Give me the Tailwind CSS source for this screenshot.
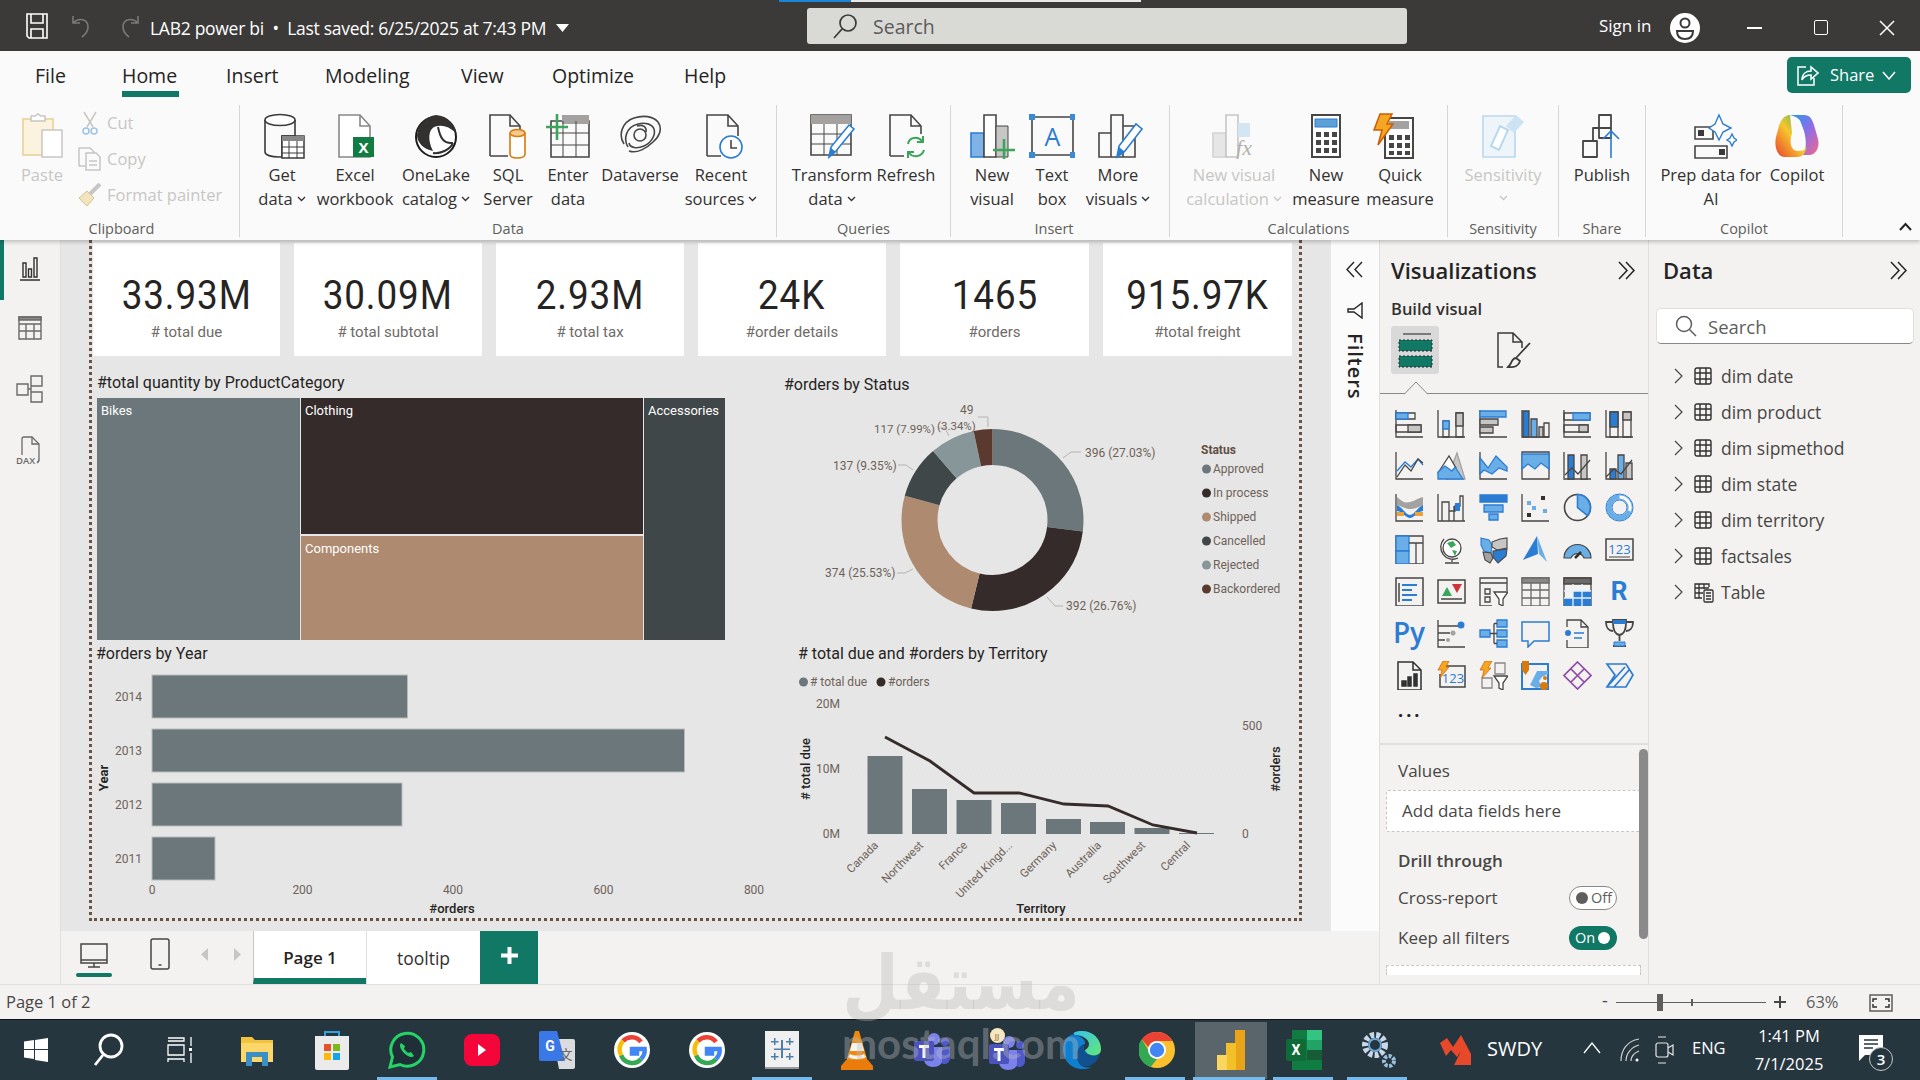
<!DOCTYPE html>
<html lang="en">
<head>
<meta charset="UTF-8">
<title>LAB2 power bi</title>
<script src="https://cdn.jsdelivr.net/npm/@tailwindcss/browser@4"></script>
</head>
<body class="relative w-[1920px] h-[1080px] overflow-hidden flex flex-col bg-[#f3f2f1] text-[#323130] font-['Open_Sans',sans-serif]">

<!-- title bar -->
<header class="relative h-[51px] bg-[#3b3a39] text-white flex items-center shrink-0">
  <div class="absolute left-[779px] top-0 h-[2px] w-[72px] bg-[#1a86d8]"></div>
  <div class="absolute left-[851px] top-0 h-[2px] w-[290px] bg-[#e8e8e8]"></div>
  <svg class="ml-[25px] w-[24px] h-[26px]" viewBox="0 0 24 26" fill="none" stroke="#fff" stroke-width="1.6"><path d="M2 1h20v24H4l-2-2z"/><path d="M6 1v9h12V1M6 25v-9h12v9"/></svg>
  <svg class="ml-[21px] w-[24px] h-[26px]" viewBox="0 0 24 26" fill="none" stroke="#7a7977" stroke-width="1.6"><path d="M3 3v7h7M3 10c6-6 15-4 15 4 0 4-2 7-6 10"/></svg>
  <svg class="ml-[23px] w-[24px] h-[26px]" viewBox="0 0 24 26" fill="none" stroke="#7a7977" stroke-width="1.6"><path d="M21 3v7h-7M21 10c-6-6-15-4-15 4 0 4 2 7 6 10"/></svg>
  <span class="ml-[9px] mt-[5px] text-[17.5px] whitespace-nowrap tracking-[-0.28px]">LAB2 power bi&nbsp; •&nbsp; Last saved: 6/25/2025 at 7:43 PM</span>
  <svg class="absolute left-[556px] top-[24px] w-[13px] h-[8px]" viewBox="0 0 13 8"><path d="M0 0h13L6.5 8z" fill="#fff"/></svg>
  <div class="absolute left-[807px] top-[8px] w-[600px] h-[36px] bg-[#d9d9d6] rounded-[3px] flex items-center text-[#5c5b59]">
    <svg class="ml-[25px] w-[26px] h-[26px]" viewBox="0 0 26 26" fill="none" stroke="#3b3a39" stroke-width="1.7"><circle cx="16" cy="10" r="8"/><path d="M10 16l-8 9"/></svg>
    <span class="ml-[15px] mt-[2px] text-[19.5px]">Search</span>
  </div>
  <span class="absolute left-[1599px] top-[14px] text-[17px] leading-[24px]">Sign in</span>
  <svg class="absolute left-[1670px] top-[13px] w-[30px] h-[30px]" viewBox="0 0 30 30" fill="none"><circle cx="15" cy="15" r="15" fill="#fff"/><circle cx="15" cy="10" r="4.5" stroke="#3b3a39" stroke-width="2"/><path d="M7 18h16c0 5-3 8-8 8s-8-3-8-8z" stroke="#3b3a39" stroke-width="2"/></svg>
  <div class="absolute left-[1747px] top-[27px] w-[15px] h-[1.5px] bg-white"></div>
  <div class="absolute left-[1814px] top-[20px] w-[14px] h-[15px] border-[1.5px] border-white rounded-[2px]"></div>
  <svg class="absolute left-[1879px] top-[20px] w-[16px] h-[16px]" viewBox="0 0 16 16" stroke="#fff" stroke-width="1.5"><path d="M1 1l14 14M15 1L1 15"/></svg>
</header>

<!-- ribbon -->
<section class="relative h-[189px] bg-[#fafafa] shrink-0 shadow-[0_2px_4px_rgba(0,0,0,0.22)] z-10">
  <nav class="h-[54px] flex items-center pl-[35px] pb-[4px] text-[19.5px] text-[#252423]">
    <span class="w-[87px]">File</span>
    <span class="w-[104px] relative font-medium">Home<span class="absolute left-0 top-[30px] w-[57px] h-[6px] bg-[#117865]"></span></span>
    <span class="w-[99px]">Insert</span>
    <span class="w-[136px]">Modeling</span>
    <span class="w-[91px]">View</span>
    <span class="w-[132px]">Optimize</span>
    <span>Help</span>
  </nav>
  <div class="absolute left-[1787px] top-[6px] w-[124px] h-[36px] bg-[#117865] rounded-[5px] text-white flex items-center text-[16.5px]">
    <svg class="ml-[9px] w-[23px] h-[23px]" viewBox="0 0 23 23" fill="none" stroke="#fff" stroke-width="1.5"><path d="M10 3H2v18h16v-7"/><path d="M6 16c0-6 4-9 9-9V3l7 6-7 6v-4c-4 0-7 1-9 5z"/></svg>
    <span class="ml-[11px]">Share</span>
    <svg class="ml-[8px] w-[14px] h-[9px]" viewBox="0 0 14 9" fill="none" stroke="#fff" stroke-width="1.5"><path d="M1 1l6 7 6-7"/></svg>
  </div>

  <div class="flex h-[132px] text-[16.5px] leading-[24px] text-[#323130] text-center">

    <!-- clipboard -->
    <div class="w-[240px] border-r border-[#d6d6d6] relative flex flex-col text-[#c8c6c4]">
      <div class="flex h-[116px]">
        <div class="w-[78px] flex flex-col items-center pt-[8px]">
          <svg class="w-[44px] h-[46px] ml-[8px]" viewBox="0 0 44 46" fill="none"><path d="M2 6h30v36H2z" fill="#fbf3dd" stroke="#ecd9a8" stroke-width="2"/><path d="M10 8V3h4l3-2 3 2h4v5z" fill="#fff" stroke="#c8c6c4" stroke-width="1.5"/><path d="M21 17h20v27H21z" fill="#fff" stroke="#c8c6c4" stroke-width="1.5"/></svg>
          <span class="mt-[4px] ml-[6px]">Paste</span>
        </div>
        <div class="flex-1 text-left">
          <div class="h-[36px] flex items-center"><svg class="w-[16px] h-[24px] ml-[4px]" viewBox="0 0 16 24" fill="none" stroke="#c8c6c4" stroke-width="1.5"><path d="M2 1l9 15M14 1L5 16"/><circle cx="4" cy="20" r="3" stroke="#9dc3e6"/><circle cx="12" cy="20" r="3" stroke="#9dc3e6"/></svg><span class="ml-[9px]">Cut</span></div>
          <div class="h-[36px] flex items-center"><svg class="w-[24px] h-[24px]" viewBox="0 0 24 24" fill="none" stroke="#c8c6c4" stroke-width="1.5"><path d="M1 1h11l4 4v14H1z"/><path d="M8 6h10l4 4v13H8z" fill="#fafafa"/><path d="M11 14h8M11 18h8"/></svg><span class="ml-[5px]">Copy</span></div>
          <div class="h-[36px] flex items-center whitespace-nowrap"><svg class="w-[24px] h-[24px]" viewBox="0 0 24 24" fill="none"><path d="M1 15l8-7 7 7-7 8z" fill="#f2e4bd" stroke="#d8c48f"/><path d="M12 11l10-10" stroke="#c8c6c4" stroke-width="4"/></svg><span class="ml-[5px]">Format painter</span></div>
        </div>
      </div>
      <div class="text-[14.5px] text-[#605e5c] leading-[17px] text-center pl-[4px]">Clipboard</div>
    </div>

    <!-- data -->
    <div class="w-[537px] border-r border-[#d6d6d6] flex flex-col">
      <div class="flex h-[116px]">
        <div class="w-[84px] flex flex-col items-center pt-[8px]">
          <svg class="w-[44px] h-[46px] ml-[6px]" viewBox="0 0 44 46" fill="none"><path d="M2 7v32c0 3 6 5 14 5h3V23h13V7" stroke="#3b3a39" stroke-width="1.6"/><ellipse cx="17" cy="7" rx="15" ry="5.5" fill="#fff" stroke="#3b3a39" stroke-width="1.6"/><path d="M19 23h22v22H19z" fill="#fff" stroke="#3b3a39" stroke-width="1.5"/><path d="M19 23h22v5H19z" fill="#8a8886"/><path d="M19 34h22M19 40h22M26 28v17M34 28v17" stroke="#3b3a39"/></svg>
          <span class="whitespace-nowrap mt-[4px]">Get</span><span class="whitespace-nowrap flex items-center gap-[4px]">data <svg class="w-[9px] h-[6px]" viewBox="0 0 9 6" fill="none" stroke="currentColor" stroke-width="1.300"><path d="M1 1l3.500 3.500L8 1"/></svg></span>
        </div>
        <div class="w-[62px] flex flex-col items-center pt-[8px]">
          <svg class="w-[44px] h-[46px]" viewBox="0 0 44 46" fill="none"><path d="M6 44V2h21l10 11v31z" fill="#fff" stroke="#8a8886" stroke-width="1.6"/><path d="M27 2v11h10" stroke="#8a8886" stroke-width="1.6"/><path d="M20 24h21v20H20z" fill="#107c41"/><text x="30.5" y="40" text-anchor="middle" font-size="15" font-weight="700" fill="#fff" font-family="Open Sans">X</text></svg>
          <span class="whitespace-nowrap mt-[4px]">Excel</span><span class="whitespace-nowrap">workbook</span>
        </div>
        <div class="w-[100px] flex flex-col items-center pt-[8px]">
          <svg class="w-[44px] h-[46px]" viewBox="0 0 44 46" fill="none"><circle cx="22" cy="24" r="20" fill="#fff" stroke="#1d1c1b" stroke-width="2"/><path d="M22 2c12 1 20 10 20 18-7-7-15-9-22-6-5 3-7 12-1 24-10-2-16-9-16-16C4 12 12 3 22 2z" fill="#323130"/><path d="M24 14c2 10 5 17 15 16M19 40c7 1 17-3 20-10" stroke="#323130" stroke-width="2"/></svg>
          <span class="whitespace-nowrap mt-[4px]">OneLake</span><span class="whitespace-nowrap flex items-center gap-[4px]">catalog <svg class="w-[9px] h-[6px]" viewBox="0 0 9 6" fill="none" stroke="currentColor" stroke-width="1.300"><path d="M1 1l3.500 3.500L8 1"/></svg></span>
        </div>
        <div class="w-[44px] flex flex-col items-center pt-[8px]">
          <svg class="w-[44px] h-[46px] shrink-0" viewBox="0 0 44 46" fill="none"><path d="M4 43V2h20l10 11v9" stroke="#484644" stroke-width="1.6"/><path d="M24 2v11h10M4 43h18" stroke="#484644" stroke-width="1.6"/><path d="M24 20v21c0 3 3 4 7 4s8-1 8-4V20" fill="#fff" stroke="#d87a0c" stroke-width="1.6"/><ellipse cx="31.5" cy="20" rx="7.5" ry="3.5" fill="#f5c88d" stroke="#d87a0c" stroke-width="1.6"/></svg>
          <span class="whitespace-nowrap mt-[4px]">SQL</span><span class="whitespace-nowrap">Server</span>
        </div>
        <div class="w-[76px] flex flex-col items-center pt-[8px]">
          <svg class="w-[44px] h-[46px]" viewBox="0 0 44 46" fill="none"><path d="M5 8h38v36H5z" stroke="#484644" stroke-width="1.6"/><path d="M16 2h27v9H16z" fill="#a3a2a0"/><path d="M5 20h38M5 32h38M17 8v36M30 8v36" stroke="#484644"/><path d="M0 14h22M11 1v26" stroke="#3ba55c" stroke-width="2.6"/></svg>
          <span class="whitespace-nowrap mt-[4px]">Enter</span><span class="whitespace-nowrap">data</span>
        </div>
        <div class="w-[68px] flex flex-col items-center pt-[8px]">
          <svg class="w-[44px] h-[46px]" viewBox="0 0 44 46" fill="none" stroke="#484644" stroke-width="1.6"><path d="M6 31C0 22 4 9 16 5c9-3 19-2 24 4 5 7 1 15-5 20-6 6-16 12-24 9"/><path d="M10 34C5 26 8 14 20 11c7-2 14 0 16 5 2 6-3 14-10 17-7 3-14 2-15-3"/><circle cx="22" cy="22" r="6"/><path d="M28 19c1-5-3-8-9-6"/></svg>
          <span class="whitespace-nowrap mt-[4px]">Dataverse</span>
        </div>
        <div class="w-[94px] flex flex-col items-center pt-[8px]">
          <svg class="w-[44px] h-[46px]" viewBox="0 0 44 46" fill="none"><path d="M8 43V2h21l10 11v10M29 2v11h10M8 43h14" stroke="#484644" stroke-width="1.6"/><circle cx="32" cy="34" r="11" fill="#fff" stroke="#2b7cd3" stroke-width="1.6"/><path d="M32 27v8h6" stroke="#484644" stroke-width="1.6"/></svg>
          <span class="whitespace-nowrap mt-[4px]">Recent</span><span class="whitespace-nowrap flex items-center gap-[4px]">sources <svg class="w-[9px] h-[6px]" viewBox="0 0 9 6" fill="none" stroke="currentColor" stroke-width="1.300"><path d="M1 1l3.500 3.500L8 1"/></svg></span>
        </div>
      </div>
      <div class="text-[14.5px] text-[#605e5c] leading-[17px]">Data</div>
    </div>

    <!-- queries -->
    <div class="w-[174px] border-r border-[#d6d6d6] flex flex-col">
      <div class="flex h-[116px]">
        <div class="w-[110px] flex flex-col items-center pt-[8px]">
          <svg class="w-[46px] h-[46px]" viewBox="0 0 46 46" fill="none"><path d="M2 2h40v40H2z" stroke="#484644" stroke-width="1.6"/><path d="M2 2h40v9H2z" fill="#a3a2a0"/><path d="M2 21h40M2 31h40M15 11v31M28 11v31" stroke="#484644"/><path d="M20 44l2-10 18-22 5 4-18 22z" fill="#fff" stroke="#2b7cd3" stroke-width="1.6"/><path d="M20 45l2-10 5 4z" fill="#2b7cd3"/></svg>
          <span class="whitespace-nowrap mt-[4px]">Transform</span><span class="whitespace-nowrap flex items-center gap-[4px]">data <svg class="w-[9px] h-[6px]" viewBox="0 0 9 6" fill="none" stroke="currentColor" stroke-width="1.300"><path d="M1 1l3.500 3.500L8 1"/></svg></span>
        </div>
        <div class="w-[38px] flex flex-col items-center pt-[8px]">
          <svg class="w-[44px] h-[46px] shrink-0" viewBox="0 0 44 46" fill="none"><path d="M6 43V2h21l10 11v8M27 2v11h10M6 43h14" stroke="#484644" stroke-width="1.6"/><path d="M24 31c1-7 10-8 14-3M39 23v6h-6M40 37c-2 7-11 8-15 3M24 45v-6h6" stroke="#3ba55c" stroke-width="2"/></svg>
          <span class="whitespace-nowrap mt-[4px]">Refresh</span>
        </div>
      </div>
      <div class="text-[14.5px] text-[#605e5c] leading-[17px]">Queries</div>
    </div>

    <!-- insert -->
    <div class="w-[219px] border-r border-[#d6d6d6] flex flex-col">
      <div class="flex h-[116px]">
        <div class="w-[82px] flex flex-col items-center pt-[8px]">
          <svg class="w-[46px] h-[46px]" viewBox="0 0 46 46" fill="none"><path d="M2 20h13v24H2z" fill="#7fb2e5" stroke="#2b7cd3" stroke-width="1.6"/><path d="M15 2h12v42H15z" fill="#fff" stroke="#484644" stroke-width="1.6"/><path d="M27 13h12v31H27z" fill="#c8c6c4" stroke="#484644" stroke-width="1"/><path d="M24 37h22M35 26v20" stroke="#3ba55c" stroke-width="2.5"/></svg>
          <span class="whitespace-nowrap mt-[4px]">New</span><span class="whitespace-nowrap">visual</span>
        </div>
        <div class="w-[38px] flex flex-col items-center pt-[8px]">
          <svg class="w-[46px] h-[46px] shrink-0" viewBox="0 0 46 46" fill="none"><path d="M3 4h41v38H3z" stroke="#484644" stroke-width="1.6"/><path d="M0 1h6v6H0zM41 1h6v6h-6zM0 39h6v6H0zM41 39h6v6h-6z" fill="#3a8bd6"/><text x="23.5" y="33" text-anchor="middle" font-size="25" fill="#2b7cd3" font-family="Open Sans">A</text></svg>
          <span class="whitespace-nowrap mt-[4px]">Text</span><span class="whitespace-nowrap">box</span>
        </div>
        <div class="w-[94px] flex flex-col items-center pt-[8px]">
          <svg class="w-[46px] h-[46px] ml-[4px]" viewBox="0 0 46 46" fill="none" stroke="#484644" stroke-width="1.6"><path d="M2 20h12v24H2zM14 2h12v42H14zM26 13h12v31H26z"/><path d="M20 44l2-11 17-22 6 5-17 22z" fill="#fff" stroke="#2b7cd3"/><path d="M20 45l2-11 6 5z" fill="#2b7cd3" stroke="none"/></svg>
          <span class="whitespace-nowrap mt-[4px]">More</span><span class="whitespace-nowrap flex items-center gap-[4px]">visuals <svg class="w-[9px] h-[6px]" viewBox="0 0 9 6" fill="none" stroke="currentColor" stroke-width="1.300"><path d="M1 1l3.500 3.500L8 1"/></svg></span>
        </div>
      </div>
      <div class="text-[14.5px] text-[#605e5c] leading-[17px] pr-[12px]">Insert</div>
    </div>

    <!-- calculations -->
    <div class="w-[278px] border-r border-[#d6d6d6] flex flex-col">
      <div class="flex h-[116px]">
        <div class="w-[128px] flex flex-col items-center pt-[8px] text-[#c8c6c4]">
          <svg class="w-[46px] h-[46px]" viewBox="0 0 46 46" fill="none"><path d="M2 20h13v24H2z" fill="#e6e6e6" stroke="#d2d2d2" stroke-width="1.6"/><path d="M15 2h12v42H15z" fill="#fafafa" stroke="#c8c6c4" stroke-width="1.6"/><path d="M27 10h12v14H27z" fill="#d5e6f3"/><text x="33" y="42" text-anchor="middle" font-size="22" font-style="italic" fill="#b3b0ad" font-family="Liberation Serif">fx</text></svg>
          <span class="whitespace-nowrap mt-[4px]">New visual</span><span class="whitespace-nowrap flex items-center gap-[4px]">calculation <svg class="w-[9px] h-[6px]" viewBox="0 0 9 6" fill="none" stroke="currentColor" stroke-width="1.300"><path d="M1 1l3.500 3.500L8 1"/></svg></span>
        </div>
        <div class="w-[56px] flex flex-col items-center pt-[8px]">
          <svg class="w-[46px] h-[46px] shrink-0" viewBox="0 0 46 46" fill="none"><path d="M9 2h28v42H9z" fill="#fff" stroke="#484644" stroke-width="2"/><path d="M12 6h22v8H12z" fill="#5ea0d8" stroke="#2b7cd3"/><path d="M13 19h5v5h-5zM21 19h5v5h-5zM29 19h5v5h-5zM13 27h5v5h-5zM21 27h5v5h-5zM29 27h5v5h-5zM13 35h5v5h-5zM21 35h5v5h-5zM29 35h5v5h-5z" fill="#484644"/></svg>
          <span class="whitespace-nowrap mt-[4px]">New</span><span class="whitespace-nowrap">measure</span>
        </div>
        <div class="w-[92px] flex flex-col items-center pt-[8px]">
          <svg class="w-[46px] h-[46px] -ml-[12px]" viewBox="0 0 46 46" fill="none"><path d="M14 5h28v40H14z" fill="#fff" stroke="#484644" stroke-width="2"/><path d="M18 8h20v8H18z" fill="#a3a2a0"/><path d="M18 22h5v5h-5zM26 22h5v5h-5zM34 22h5v5h-5zM18 30h5v5h-5zM26 30h5v5h-5zM34 30h5v5h-5zM18 38h5v4h-5zM26 38h5v4h-5zM34 38h5v4h-5z" fill="#484644"/><path d="M9 1h12l-5 10h6L7 32l4-15H3z" fill="#f5a623" stroke="#c95f05" stroke-width="1.5"/></svg>
          <span class="whitespace-nowrap mt-[4px]">Quick</span><span class="whitespace-nowrap">measure</span>
        </div>
      </div>
      <div class="text-[14.5px] text-[#605e5c] leading-[17px]">Calculations</div>
    </div>

    <!-- sensitivity -->
    <div class="w-[111px] border-r border-[#d6d6d6] flex flex-col text-[#c8c6c4]">
      <div class="h-[116px] flex flex-col items-center pt-[8px]">
        <svg class="w-[46px] h-[46px]" viewBox="0 0 46 46" fill="none"><path d="M3 3h32v41H3z" fill="#eef5fa" stroke="#b9d8ee" stroke-width="1.6"/><path d="M11 33l9-20 8 4-9 20z" fill="#fff" stroke="#b9d8ee" stroke-width="2"/><path d="M26 13l10-11 8 7-10 11z" fill="#cbe3f3"/></svg>
        <span class="mt-[4px]">Sensitivity</span><svg class="w-[9px] h-[6px] mt-[8px]" viewBox="0 0 9 6" fill="none" stroke="currentColor" stroke-width="1.300"><path d="M1 1l3.500 3.500L8 1"/></svg>
      </div>
      <div class="text-[14.5px] text-[#605e5c] leading-[17px]">Sensitivity</div>
    </div>

    <!-- share -->
    <div class="w-[87px] border-r border-[#d6d6d6] flex flex-col">
      <div class="h-[116px] flex flex-col items-center pt-[8px]">
        <svg class="w-[46px] h-[46px]" viewBox="0 0 46 46" fill="none" stroke="#484644" stroke-width="1.8"><path d="M4 28h14v16H4zM20 2h12v23H20zM14 28V15h18" stroke-linejoin="round"/><path d="M32 45V18M24 26l8-8 8 8" stroke="#2b7cd3" stroke-width="1.6"/></svg>
        <span class="mt-[4px]">Publish</span>
      </div>
      <div class="text-[14.5px] text-[#605e5c] leading-[17px]">Share</div>
    </div>

    <!-- copilot -->
    <div class="w-[197px] border-r border-[#d6d6d6] flex flex-col">
      <div class="flex h-[116px]">
        <div class="w-[130px] flex flex-col items-center pt-[8px]">
          <svg class="w-[46px] h-[46px] ml-[6px]" viewBox="0 0 46 46" fill="none"><path d="M4 14h18v12H4zM4 33h32v12H4z" stroke="#484644" stroke-width="1.6"/><path d="M7 17h6v6H7zM28 36h6v6h-6z" fill="#3b3a39"/><path d="M28 2l4 9 8 4-8 4-4 8-4-8-6-4 6-4zM41 21l2 4 3 2-3 2-2 4-2-4-3-2 3-2z" fill="#fff" stroke="#2b7cd3" stroke-width="1.4"/></svg>
          <span class="whitespace-nowrap mt-[4px]">Prep data for</span><span>AI</span>
        </div>
        <div class="w-[42px] flex flex-col items-center pt-[8px]">
          <svg class="w-[46px] h-[46px] shrink-0" viewBox="0 0 46 46" fill="none"><defs><linearGradient id="cp1" x1="0" y1="0" x2="1" y2="1"><stop offset="0" stop-color="#1f9cf0"/><stop offset=".5" stop-color="#8b6ee6"/><stop offset="1" stop-color="#f2688b"/></linearGradient><linearGradient id="cp2" x1="0" y1="1" x2="1" y2="0"><stop offset="0" stop-color="#e7402c"/><stop offset=".5" stop-color="#f7c62d"/><stop offset="1" stop-color="#2fb56c"/></linearGradient></defs><path d="M16 2h14c6 0 8 4 10 10l4 14c2 8-2 16-9 16h-6c3-4 4-14 1-24l-3-8c-1-4-4-6-11-8z" fill="url(#cp1)"/><path d="M16 2c-6 0-9 5-11 11L2 24c-2 9 1 20 9 20h12c5 0 8-3 10-10-2 3-5 4-9 4-7 0-9-8-6-18z" fill="url(#cp2)"/></svg>
          <span class="whitespace-nowrap mt-[4px]">Copilot</span>
        </div>
      </div>
      <div class="text-[14.5px] text-[#605e5c] leading-[17px]">Copilot</div>
    </div>

    <div class="flex-1 relative"><svg class="absolute right-[8px] top-[117px] w-[13px] h-[9px]" viewBox="0 0 13 9" fill="none" stroke="#252423" stroke-width="2"><path d="M1 8l5.500-6 5.500 6"/></svg></div>
  </div>
</section>

<!-- main area -->
<main class="flex h-[744px] shrink-0 relative">

  <!-- view switcher -->
  <aside class="w-[61px] border-r border-[#e1dfdd] relative flex flex-col items-center">
    <div class="absolute left-0 top-0 w-[4px] h-[60px] bg-[#117865]"></div>
    <svg class="mt-[17px] w-[22px] h-[24px]" viewBox="0 0 22 24" fill="none" stroke="#323130" stroke-width="1.4"><path d="M1 23h20M4 6v14h3V6zM9.500 12v8h3v-8zM15 1v19h3V1z"/></svg>
    <svg class="mt-[35px] w-[24px] h-[24px]" viewBox="0 0 24 24" fill="none" stroke="#6b6a68" stroke-width="1.4"><path d="M1 1h22v22H1zM1 8h22M1 15h22M8 8v15M16 8v15"/><path d="M1 1h22v3H1z" fill="#8a8886"/></svg>
    <svg class="mt-[35px] w-[28px] h-[28px]" viewBox="0 0 28 28" fill="none" stroke="#6b6a68" stroke-width="1.4"><path d="M15 1h11v10H15zM15 17h11v10H15zM1 9h11v11H1zM12 14h3M15 6v16"/></svg>
    <svg class="mt-[33px] w-[28px] h-[30px]" viewBox="0 0 28 30" fill="none" stroke="#6b6a68" stroke-width="1.3"><path d="M6 19V3a2 2 0 0 1 2-2h8l7 7v14a5 5 0 0 1-2 5"/><path d="M16 1v7h7"/><text x="0" y="28" font-size="9.500" font-weight="600" fill="#6b6a68" stroke="none" font-family="Open Sans">DAX</text></svg>
  </aside>

  <div class="w-[1318px] flex flex-col">
    <div class="flex h-[691px]">

      <!-- report canvas -->
      <div class="w-[1270px] bg-[#e6e6e6] pl-[28px]">
        <div class="w-[1213px] h-[681px] border-x-[3px] border-b-[3px] border-dotted border-[#6b5344]">

          <!-- cards -->
          <div class="h-[116px] pt-[3px] pl-[1px] flex gap-[14px] font-['Roboto',sans-serif]">
            <div class="w-[187px] h-[113px] bg-white flex flex-col items-center pt-[31px]"><span class="text-[40px] leading-[44px] text-[#252423] tracking-[1px] scale-x-[0.92]">33.93M</span><span class="text-[15px] leading-[20px] mt-[4px] text-[#6e6a66]"># total due</span></div>
            <div class="w-[188px] h-[113px] bg-white flex flex-col items-center pt-[31px]"><span class="text-[40px] leading-[44px] text-[#252423] tracking-[1px] scale-x-[0.92]">30.09M</span><span class="text-[15px] leading-[20px] mt-[4px] text-[#6e6a66]"># total subtotal</span></div>
            <div class="w-[188px] h-[113px] bg-white flex flex-col items-center pt-[31px]"><span class="text-[40px] leading-[44px] text-[#252423] tracking-[1px] scale-x-[0.92]">2.93M</span><span class="text-[15px] leading-[20px] mt-[4px] text-[#6e6a66]"># total tax</span></div>
            <div class="w-[188px] h-[113px] bg-white flex flex-col items-center pt-[31px]"><span class="text-[40px] leading-[44px] text-[#252423] tracking-[1px] scale-x-[0.92]">24K</span><span class="text-[15px] leading-[20px] mt-[4px] text-[#6e6a66]">#order details</span></div>
            <div class="w-[189px] h-[113px] bg-white flex flex-col items-center pt-[31px]"><span class="text-[40px] leading-[44px] text-[#252423] tracking-[1px] scale-x-[0.92]">1465</span><span class="text-[15px] leading-[20px] mt-[4px] text-[#6e6a66]">#orders</span></div>
            <div class="w-[189px] h-[113px] bg-white flex flex-col items-center pt-[31px]"><span class="text-[40px] leading-[44px] text-[#252423] tracking-[1px] scale-x-[0.92]">915.97K</span><span class="text-[15px] leading-[20px] mt-[4px] text-[#6e6a66]">#total freight</span></div>
          </div>

          <!-- top row: treemap + donut -->
          <div class="flex h-[284px] font-['Roboto',sans-serif]">
            <div class="w-[668px] pl-[5px] pt-[15px]">
              <div class="text-[16px] leading-[24px] text-[#252423]">#total quantity by ProductCategory</div>
              <div class="mt-[3px] w-[628px] h-[242px] flex gap-[1px] text-[13px] text-white">
                <div class="w-[203px] bg-[#6b777a] pl-[4px] pt-[3px]">Bikes</div>
                <div class="w-[342px] flex flex-col gap-[2px]">
                  <div class="h-[136px] bg-[#362b2b] pl-[4px] pt-[3px]">Clothing</div>
                  <div class="flex-1 bg-[#ae8a70] pl-[4px] pt-[3px]">Components</div>
                </div>
                <div class="flex-1 bg-[#3f4748] pl-[4px] pt-[3px]">Accessories</div>
              </div>
            </div>
            <svg class="w-[537px] h-[284px] overflow-visible" viewBox="760 356 537 284" font-family="Roboto" font-size="12" fill="#6e6258">
              <text x="784" y="390" font-size="16" fill="#252423">#orders by Status</text>
              <g fill="none" stroke-width="36" transform="rotate(-90 992.500 520)">
                <circle cx="992.500" cy="520" r="73" pathLength="100" stroke="#6b777a" stroke-dasharray="27.03 100"/>
                <circle cx="992.500" cy="520" r="73" pathLength="100" stroke="#362b2b" stroke-dasharray="26.76 100" stroke-dashoffset="-27.03"/>
                <circle cx="992.500" cy="520" r="73" pathLength="100" stroke="#ae8a70" stroke-dasharray="25.53 100" stroke-dashoffset="-53.79"/>
                <circle cx="992.500" cy="520" r="73" pathLength="100" stroke="#3f4748" stroke-dasharray="9.35 100" stroke-dashoffset="-79.32"/>
                <circle cx="992.500" cy="520" r="73" pathLength="100" stroke="#869699" stroke-dasharray="7.99 100" stroke-dashoffset="-88.67"/>
                <circle cx="992.500" cy="520" r="73" pathLength="100" stroke="#5a3a2e" stroke-dasharray="3.34 100" stroke-dashoffset="-96.66"/>
              </g>
              <g fill="none" stroke="#b5b3b0" stroke-width="1">
                <path d="M1063 458l8-6h10M1047 597l8 9h8M913 569l-8 4h-8M913 470l-7-5h-8M949 436l-4-8h-6M988 427v-10h-10"/>
              </g>
              <text x="1085" y="457">396 (27.03%)</text>
              <text x="1066" y="610">392 (26.76%)</text>
              <text x="825" y="577">374 (25.53%)</text>
              <text x="833" y="470">137 (9.35%)</text>
              <text x="874" y="433" font-size="11.500">117 (7.99%)</text>
              <text x="937" y="430" font-size="11.500">(3.34%)</text>
              <text x="960" y="414">49</text>
              <text x="1201" y="454" font-weight="700" fill="#5e4e42">Status</text>
              <circle cx="1206.500" cy="469" r="4.500" fill="#6b777a"/><text x="1213" y="473">Approved</text>
              <circle cx="1206.500" cy="493" r="4.500" fill="#362b2b"/><text x="1213" y="497">In process</text>
              <circle cx="1206.500" cy="517" r="4.500" fill="#ae8a70"/><text x="1213" y="521">Shipped</text>
              <circle cx="1206.500" cy="541" r="4.500" fill="#3f4748"/><text x="1213" y="545">Cancelled</text>
              <circle cx="1206.500" cy="565" r="4.500" fill="#869699"/><text x="1213" y="569">Rejected</text>
              <circle cx="1206.500" cy="589" r="4.500" fill="#5a3a2e"/><text x="1213" y="593">Backordered</text>
            </svg>
          </div>

          <!-- bottom row: bar + combo -->
          <div class="flex h-[278px]">
            <svg class="w-[668px] h-[278px] overflow-visible" viewBox="92 640 668 278" font-family="Roboto" font-size="12" fill="#6e6258">
              <text x="96" y="659" font-size="16" fill="#252423">#orders by Year</text>
              <g fill="#6b777a" stroke="#b9bbbb" stroke-width="1">
                <rect x="152" y="675" width="255.500" height="43"/>
                <rect x="152" y="729" width="532.500" height="43"/>
                <rect x="152" y="783" width="250" height="43"/>
                <rect x="152" y="837" width="63" height="43"/>
              </g>
              <g text-anchor="end">
                <text x="142" y="701">2014</text><text x="142" y="755">2013</text><text x="142" y="809">2012</text><text x="142" y="863">2011</text>
              </g>
              <g text-anchor="middle">
                <text x="152" y="894">0</text><text x="302.500" y="894">200</text><text x="453" y="894">400</text><text x="603.500" y="894">600</text><text x="754" y="894">800</text>
                <text x="452" y="913" font-size="13" font-weight="500" fill="#252423">#orders</text>
                <text x="0" y="0" font-size="13" font-weight="700" fill="#252423" transform="translate(108 778) rotate(-90)">Year</text>
              </g>
            </svg>
            <svg class="w-[537px] h-[278px] overflow-visible" viewBox="760 640 537 278" font-family="Roboto" font-size="12" fill="#6e6258">
              <text x="798" y="659" font-size="16" fill="#252423"># total due and #orders by Territory</text>
              <circle cx="803.500" cy="682" r="4.500" fill="#6b777a"/><text x="810" y="686"># total due</text>
              <circle cx="881" cy="682" r="4.500" fill="#362b2b"/><text x="888" y="686">#orders</text>
              <g text-anchor="end"><text x="840" y="708">20M</text><text x="840" y="773">10M</text><text x="840" y="838">0M</text></g>
              <path d="M848 704h400M848 769h400" stroke="#dedede" stroke-dasharray="1 3"/>
              <g fill="#6b777a">
                <rect x="867.500" y="756" width="35" height="78"/><rect x="912" y="789" width="35" height="45"/><rect x="956.500" y="800" width="35" height="34"/><rect x="1001" y="803" width="35" height="31"/><rect x="1046" y="819" width="35" height="15"/><rect x="1090" y="822" width="35" height="12"/><rect x="1134.500" y="828" width="35" height="6"/><rect x="1179" y="833" width="35" height="1"/>
              </g>
              <path d="M885 737L930 761L974 793L1019 793L1064 804L1108 806L1153 825L1197 833" fill="none" stroke="#362b2b" stroke-width="2.800"/>
              <text x="1242" y="730">500</text><text x="1242" y="838">0</text>
              <g text-anchor="end" font-size="11.500">
                <text transform="translate(879 846) rotate(-45)">Canada</text>
                <text transform="translate(924 846) rotate(-45)">Northwest</text>
                <text transform="translate(968 846) rotate(-45)">France</text>
                <text transform="translate(1013 846) rotate(-45)">United Kingd...</text>
                <text transform="translate(1057 846) rotate(-45)">Germany</text>
                <text transform="translate(1102 846) rotate(-45)">Australia</text>
                <text transform="translate(1146 846) rotate(-45)">Southwest</text>
                <text transform="translate(1191 846) rotate(-45)">Central</text>
              </g>
              <g text-anchor="middle" font-size="13" font-weight="500" fill="#252423">
                <text x="1041" y="913">Territory</text>
                <text transform="translate(810 769) rotate(-90)"># total due</text>
                <text transform="translate(1280 769) rotate(-90)">#orders</text>
              </g>
            </svg>
          </div>
        </div>
      </div>

      <!-- collapsed filters -->
      <div class="w-[48px] bg-[#fbfbfb] flex flex-col items-center">
        <svg class="mt-[21px] w-[18px] h-[17px]" viewBox="0 0 18 17" fill="none" stroke="#252423" stroke-width="1.400"><path d="M8 1L1 8.500 8 16M16 1L9 8.500 16 16"/></svg>
        <svg class="mt-[24px] w-[18px] h-[17px]" viewBox="0 0 18 17" fill="none" stroke="#252423" stroke-width="1.400"><path d="M16 1v15L8 10H2V7h6z"/></svg>
        <span class="mt-[14px] text-[20px] font-semibold leading-[22px] tracking-[1px] [writing-mode:vertical-rl] text-[#252423]">Filters</span>
      </div>
    </div>

    <!-- page tabs -->
    <div class="h-[53px] flex bg-[#f3f2f1]">
      <div class="w-[58px] flex flex-col items-center pt-[10px] pl-[8px]">
        <svg class="w-[30px] h-[30px]" viewBox="0 0 30 30" fill="none" stroke="#484644" stroke-width="1.500"><path d="M2 3h26v19H2zM15 22v4M9 26h12"/><path d="M2 19h26" /></svg>
        <div class="w-[36px] h-[4px] mt-[2px] rounded-full bg-[#117865]"></div>
      </div>
      <div class="w-[66px] pt-[7px] pl-[31px]"><svg class="w-[20px] h-[32px]" viewBox="0 0 20 32" fill="none" stroke="#484644" stroke-width="1.500"><rect x="1" y="1" width="18" height="30" rx="2"/><path d="M8.500 27h3"/></svg></div>
      <div class="w-[68px] flex items-center gap-[26px] pl-[16px] pb-[6px]">
        <svg class="w-[7px] h-[13px]" viewBox="0 0 7 13"><path d="M7 0v13L0 6.500z" fill="#c8c6c4"/></svg>
        <svg class="w-[7px] h-[13px]" viewBox="0 0 7 13"><path d="M0 0v13l7-6.500z" fill="#c8c6c4"/></svg>
      </div>
      <div class="w-[113px] bg-white border-l border-[#c8c6c4] border-b-[6px] border-b-[#117865] flex items-center justify-center text-[17px] font-semibold text-[#252423] pt-[6px]">Page 1</div>
      <div class="w-[114px] bg-white border-l border-[#e1dfdd] flex items-center justify-center text-[17.5px] text-[#323130] pt-[1px]">tooltip</div>
      <div class="w-[58px] bg-[#117865] flex items-center justify-center pb-[4px]"><svg class="w-[17px] h-[17px]" viewBox="0 0 17 17"><path d="M6.500 0h4v6.500H17v4h-6.500V17h-4v-6.500H0v-4h6.500z" fill="#fff"/></svg></div>
    </div>
  </div>

  <!-- visualizations pane -->
  <aside class="w-[270px] border-x border-[#e1dfdd] overflow-hidden relative">
    <div class="h-[505px] border-b-2 border-[#e1dfdd]">
      <div class="flex items-center h-[60px] pl-[11px] pr-[12px] justify-between">
        <span class="text-[22px] font-semibold text-[#252423]">Visualizations</span>
        <svg class="w-[19px] h-[19px]" viewBox="0 0 19 19" fill="none" stroke="#252423" stroke-width="1.500"><path d="M2 1l8 8.500L2 18M9 1l8 8.500L9 18"/></svg>
      </div>
      <div class="pl-[11px] text-[16.5px] font-semibold leading-[20px] text-[#323130] -mt-[1px]">Build visual</div>
      <div class="ml-[11px] mt-[7px] flex items-center h-[48px]">
        <div class="w-[48px] h-[48px] bg-[#d9d9d9] rounded-[3px] flex items-center justify-center">
          <svg class="w-[36px] h-[38px]" viewBox="0 0 36 38"><path d="M6 3h28" stroke="#3b3a39" stroke-width="1.200"/><rect x="2" y="9" width="33" height="11" fill="#117865" stroke="#252423" stroke-dasharray="2 2"/><rect x="2" y="25" width="33" height="11" fill="#117865" stroke="#252423" stroke-dasharray="2 2"/></svg>
        </div>
        <svg class="ml-[57px] w-[38px] h-[38px]" viewBox="0 0 38 38" fill="none" stroke="#3b3a39" stroke-width="1.500"><path d="M7 36H2V2h15l9 9v6M17 2v9h9"/><path d="M34 12L20 27M12 36c7 1 11-2 12-6l-4-3c-3 0-4 3-5 5-1 2-2 3-3 4z" stroke-width="1.800"/></svg>
      </div>
      <div class="relative mt-[19px] h-0 border-t border-[#8a8886]">
        <svg class="absolute left-[24px] -top-[13px] w-[24px] h-[14px]" viewBox="0 0 24 14"><path d="M0 13.500L12 1l12 12.500" fill="#f3f2f1" stroke="#8a8886"/><path d="M1 14h22" stroke="#f3f2f1" stroke-width="2"/></svg>
      </div>

      <!-- visual type icons -->
      <div class="ml-[8px] mt-[8px] grid grid-cols-[repeat(6,42px)] auto-rows-[42px] place-items-center">
        <svg class="w-[29px] h-[29px]" viewBox="0 0 29 29" fill="none" stroke="#484644" stroke-width="1.300"><path d="M1 1v27h27"/><path d="M1 4h19v6H1z"/><path d="M1 4h12v6H1z" fill="#6aaee8" stroke="#2b7cd3"/><path d="M1 16h25v7H1z"/><path d="M13 16h13v7H13z" fill="#c8c6c4"/></svg>
        <svg class="w-[29px] h-[29px]" viewBox="0 0 29 29" fill="none" stroke="#484644" stroke-width="1.300"><path d="M1 1v27h27"/><path d="M6 12h6v16H6z"/><path d="M6 12h6v8H6z" fill="#6aaee8" stroke="#2b7cd3"/><path d="M19 4h7v24h-7z"/><path d="M19 4h7v13h-7z" fill="#c8c6c4"/></svg>
        <svg class="w-[29px] h-[29px]" viewBox="0 0 29 29" fill="none" stroke="#484644" stroke-width="1.300"><path d="M1 1v27h27"/><path d="M1 2h26v6H1z" fill="#6aaee8" stroke="#2b7cd3"/><path d="M1 10h18v6H1zM1 18h13v6H1z" fill="#c8c6c4"/></svg>
        <svg class="w-[29px] h-[29px]" viewBox="0 0 29 29" fill="none" stroke="#484644" stroke-width="1.300"><path d="M1 1v27h27"/><path d="M2 2h6v26H2z" fill="#2b7cd3"/><path d="M10 10h6v18h-6z" fill="#6aaee8"/><path d="M18 18h4v10h-4z" fill="#c8c6c4"/><path d="M23 14h5v14h-5z"/></svg>
        <svg class="w-[29px] h-[29px]" viewBox="0 0 29 29" fill="none" stroke="#484644" stroke-width="1.300"><path d="M1 1v27h27"/><path d="M1 4h26v7H1z"/><path d="M10 4h17v7H10z" fill="#6aaee8" stroke="#2b7cd3"/><path d="M1 16h24v7H1z"/><path d="M16 16h9v7h-9z" fill="#c8c6c4"/></svg>
        <svg class="w-[29px] h-[29px]" viewBox="0 0 29 29" fill="none" stroke="#484644" stroke-width="1.300"><path d="M1 1v27h27"/><path d="M5 3h8v25H5z"/><path d="M5 3h8v15H5z" fill="#2b7cd3"/><path d="M18 3h8v25h-8z"/><path d="M18 3h8v8h-8z" fill="#c8c6c4"/></svg>

        <svg class="w-[29px] h-[29px]" viewBox="0 0 29 29" fill="none" stroke="#484644" stroke-width="1.300"><path d="M1 1v27h27"/><path d="M2 20l8-9 6 5 7-8 5 6" stroke="#2b7cd3"/><path d="M2 26l8-12 6 6 7-12 5 4"/></svg>
        <svg class="w-[29px] h-[29px]" viewBox="0 0 29 29" fill="none" stroke="#484644" stroke-width="1.300"><path d="M10 28L20 2l8 26z" fill="#c8c6c4" stroke="#a3a2a0"/><path d="M1 22L12 5l7 12-9 11z" fill="#fff"/><path d="M1 28v-7l7-6 7 5 3-4 8 12z" fill="#6aaee8" stroke="#2b7cd3"/></svg>
        <svg class="w-[29px] h-[29px]" viewBox="0 0 29 29" fill="none" stroke="#484644" stroke-width="1.300"><path d="M1 1v27h27"/><path d="M1 7l8 10 8-12 11 11v4l-8-3-7 6-8-4-4 4z" fill="#6aaee8" stroke="#2b7cd3"/></svg>
        <svg class="w-[29px] h-[29px]" viewBox="0 0 29 29" fill="none" stroke="#484644" stroke-width="1.300"><path d="M1 1h27v27H1z"/><path d="M1 3h27v15l-8-6-6 6-7-5-6 5z" fill="#6aaee8" stroke="#2b7cd3"/></svg>
        <svg class="w-[29px] h-[29px]" viewBox="0 0 29 29" fill="none" stroke="#484644" stroke-width="1.300"><path d="M1 1v27h27"/><path d="M5 4h6v24H5z" fill="#2b7cd3"/><path d="M18 4h6v24h-6z" fill="#c8c6c4"/><path d="M2 24l7-7 6 6 12-14"/></svg>
        <svg class="w-[29px] h-[29px]" viewBox="0 0 29 29" fill="none" stroke="#484644" stroke-width="1.300"><path d="M1 1v27h27"/><path d="M5 18h6v10H5z" fill="#2b7cd3"/><path d="M13 4h6v24h-6z" fill="#6aaee8"/><path d="M21 12h6v16h-6z" fill="#c8c6c4"/><path d="M1 26l8-8 7 5 11-14"/></svg>

        <svg class="w-[29px] h-[29px]" viewBox="0 0 29 29" fill="none" stroke="#484644" stroke-width="1.300"><path d="M1 1v27h27"/><path d="M2 4c7 6 8 6 13 5s8-4 13-5v8c-6 3-9 4-13 4S8 14 2 12z" fill="#a3a2a0" stroke="none"/><path d="M2 12c6 3 9 10 13 10s7-7 13-10v6c-6 1-9 7-13 7S8 19 2 18z" fill="#2b7cd3" stroke="none"/><path d="M2 19h7v4H2zM20 19h8v4h-8z" fill="#e8a33d" stroke="none"/></svg>
        <svg class="w-[29px] h-[29px]" viewBox="0 0 29 29" fill="none" stroke="#484644" stroke-width="1.300"><path d="M1 1v27h27"/><path d="M5 28V9h7v19M12 18h6v-5h5V3h3v25M17 28v-15"/><path d="M18 18h5v-8h-5z" fill="#2b7cd3" stroke="none"/></svg>
        <svg class="w-[29px] h-[29px]" viewBox="0 0 29 29" fill="none" stroke="#2b7cd3" stroke-width="1.300"><path d="M1 2h27v7H1z" fill="#2b7cd3"/><path d="M5 12h19v7H5z" fill="#6aaee8"/><path d="M10 21h9v6h-9z" fill="#6aaee8"/></svg>
        <svg class="w-[29px] h-[29px]" viewBox="0 0 29 29" fill="none" stroke="#484644" stroke-width="1.300"><path d="M1 1v27h27"/><path d="M6 8h4v4H6zM22 16h4v4h-4z M11 13h4v4h-4z" fill="#6aaee8" stroke="none"/><path d="M20 3h4v4h-4zM6 20h4v4H6z" fill="#323130" stroke="none"/></svg>
        <svg class="w-[29px] h-[29px]" viewBox="0 0 29 29" fill="none" stroke="#484644" stroke-width="1.600"><circle cx="14.500" cy="14.500" r="13"/><path d="M14.500 1.500a13 13 0 0 1 10 21l-10-8z" fill="#6aaee8" stroke="#2b7cd3"/></svg>
        <svg class="w-[29px] h-[29px]" viewBox="0 0 29 29" fill="none"><circle cx="14.500" cy="14.500" r="10.500" stroke="#6aaee8" stroke-width="5"/><path d="M14.500 4a10.500 10.500 0 0 1 10 14" stroke="#fff" stroke-width="3"/><circle cx="14.500" cy="14.500" r="13.500" stroke="#2b7cd3"/><circle cx="14.500" cy="14.500" r="7.500" stroke="#2b7cd3"/></svg>

        <svg class="w-[29px] h-[29px]" viewBox="0 0 29 29" fill="none" stroke="#484644" stroke-width="1.300"><path d="M1 1h27v28H1z"/><path d="M1 1h13v15H1z" fill="#6aaee8" stroke="#2b7cd3"/><path d="M1 16h13v13H1z" fill="#6aaee8" stroke="#2b7cd3"/><path d="M14 8h14M21 8v21"/></svg>
        <svg class="w-[29px] h-[29px]" viewBox="0 0 29 29" fill="none" stroke="#484644" stroke-width="1.300"><circle cx="15" cy="13" r="9" fill="#fff"/><path d="M10 8l6-2 3 4-5 3zM15 15l5 1-2 5z" fill="#3ba55c" stroke="none"/><path d="M7 4a12 12 0 0 0 14 19M15 24v3M8 28h14"/></svg>
        <svg class="w-[29px] h-[29px]" viewBox="0 0 29 29" fill="none" stroke="#484644" stroke-width="1.100"><path d="M2 3l8 2 3 5-1 8-7-2-3-6z" fill="#6aaee8" stroke="#2b7cd3"/><path d="M13 7l8-3 7-1 0 10-10 2-5-3z" fill="#c8c6c4"/><path d="M4 17l8 1 2 5-3 5-5-3z" fill="#a3a2a0"/><path d="M14 16l14-2-1 7-8 7-5-6z" fill="#2b7cd3"/></svg>
        <svg class="w-[29px] h-[29px]" viewBox="0 0 29 29"><path d="M16 1L2 25l15-6z" fill="#2b7cd3"/><path d="M16 1l2 18 8 8z" fill="#6aaee8"/></svg>
        <svg class="w-[29px] h-[29px]" viewBox="0 0 29 29" fill="none"><path d="M1 23A13 13 0 0 1 28 23h-7a7 7 0 0 0-13 0z" fill="#6aaee8" stroke="#484644" stroke-width="1.200"/><path d="M12 23l6-6" stroke="#323130" stroke-width="2.500"/></svg>
        <svg class="w-[29px] h-[29px]" viewBox="0 0 29 29" fill="none"><path d="M1 4h27v21H1z" stroke="#484644" stroke-width="1.500"/><path d="M4 22h21" stroke="#484644"/><text x="14.500" y="19" text-anchor="middle" font-size="13" fill="#2b7cd3" font-family="Open Sans">123</text></svg>

        <svg class="w-[29px] h-[29px]" viewBox="0 0 29 29" fill="none" stroke="#484644" stroke-width="1.500"><path d="M1 1h27v28H1z"/><path d="M7 8h15M7 13h10M7 18h15M7 23h10" stroke="#2b7cd3" stroke-width="2"/><path d="M4 6v19"/></svg>
        <svg class="w-[29px] h-[29px]" viewBox="0 0 29 29" fill="none" stroke="#484644" stroke-width="1.500"><path d="M1 3h27v23H1z"/><path d="M5 19l5-9 5 9z" fill="#3ba55c" stroke="none"/><path d="M15 7h10l-5 9z" fill="#d13438" stroke="none"/><path d="M4 22h21"/></svg>
        <svg class="w-[29px] h-[29px]" viewBox="0 0 29 29" fill="none" stroke="#484644" stroke-width="1.300"><path d="M28 14V1H1v28h12M1 6h27"/><path d="M6 12h5v5H6zM6 20h5v5H6z"/><path d="M15 15h14l-5 7v7l-4-2v-5z" fill="#fff"/></svg>
        <svg class="w-[29px] h-[29px]" viewBox="0 0 29 29" fill="none" stroke="#6b6a68" stroke-width="1.300"><path d="M1 1h27v28H1z"/><path d="M1 1h27v5H1z" fill="#8a8886"/><path d="M1 13h27M1 21h27M10 6v23M19 6v23"/></svg>
        <svg class="w-[29px] h-[29px]" viewBox="0 0 29 29" fill="none" stroke="#484644" stroke-width="1.300"><path d="M1 1h27v28H1z"/><path d="M1 1h27v6H1z" fill="#6b6a68"/><path d="M10 14h18v7H10zM1 21h27v8H1z" fill="#2b7cd3" stroke="none"/><path d="M1 14h27M1 21h27M10 7v22M19 7v22" stroke="#e6f0fa"/></svg>
        <span class="text-[26px] font-bold leading-none text-[#2b7cd3] font-['Roboto',sans-serif]">R</span>

        <span class="text-[28px] font-semibold leading-none text-[#2b7cd3] -mt-[2px]">Py</span>
        <svg class="w-[29px] h-[29px]" viewBox="0 0 29 29" fill="none" stroke="#484644" stroke-width="1.300"><path d="M1 1v27h27M1 7h20M1 14h12M1 21h7"/><circle cx="24" cy="6" r="3.500" fill="#2b7cd3" stroke="none"/><circle cx="16" cy="14" r="2.500" fill="#a3a2a0" stroke="none"/><circle cx="11" cy="21" r="2" fill="#a3a2a0" stroke="none"/></svg>
        <svg class="w-[29px] h-[29px]" viewBox="0 0 29 29" fill="none" stroke="#2b7cd3" stroke-width="1.300"><path d="M1 11h10v7H1zM18 1h10v7H18zM18 11h10v7H18zM18 21h10v7H18z" fill="#6aaee8"/><path d="M11 14.500h7M15 4.500v20M15 4.500h3M15 24.500h3" stroke="#484644"/></svg>
        <svg class="w-[29px] h-[29px]" viewBox="0 0 29 29" fill="none" stroke="#2b7cd3" stroke-width="1.500"><path d="M1 3h27v19H13l-6 6v-6H1z"/></svg>
        <svg class="w-[29px] h-[29px]" viewBox="0 0 29 29" fill="none" stroke="#484644" stroke-width="1.300"><path d="M4 8V1h14l7 7v21H4v-8M18 1v7h7"/><circle cx="5" cy="14" r="3" fill="#2b7cd3" stroke="none"/><path d="M11 14h10M11 19h8" stroke="#2b7cd3"/></svg>
        <svg class="w-[29px] h-[29px]" viewBox="0 0 29 29" fill="none" stroke="#484644" stroke-width="1.800"><path d="M8 1h13v3c0 6-1 11-6.500 12C9 15 8 10 8 4z"/><path d="M8 3H1c0 6 3 9 7 9M21 3h7c0 6-3 9-7 9M14.500 16v6M8 27h13"/><path d="M8 1h13v4H8z" fill="#2b7cd3" stroke="none"/><path d="M9 23h11v4H9z" fill="#6aaee8" stroke="#2b7cd3" stroke-width="1"/></svg>

        <svg class="w-[29px] h-[29px]" viewBox="0 0 29 29" fill="none" stroke="#323130" stroke-width="1.500"><path d="M3 29V1h15l8 8v20zM18 1v8h8"/><path d="M7 25v-5h4v5zM13 25v-9h3v9zM19 25v-12h3v12z" fill="#323130"/></svg>
        <svg class="w-[29px] h-[29px]" viewBox="0 0 29 29" fill="none"><path d="M6 5h22v21H3V13" stroke="#484644" stroke-width="1.500"/><text x="16" y="22" text-anchor="middle" font-size="13" fill="#2b7cd3" font-family="Open Sans">123</text><path d="M6 0h6l-3 6h3L3 17l2-8H1z" fill="#f5a623" stroke="#c95f05" stroke-width=".7"/></svg>
        <svg class="w-[29px] h-[29px]" viewBox="0 0 29 29" fill="none" stroke="#8a8886" stroke-width="1.300"><path d="M16 2h10v11H16zM3 17h10v10H3z"/><path d="M15 15h14l-5 7v7l-4-2v-5z" fill="#fff" stroke="#484644"/><path d="M6 0h7l-4 7h3L3 17l2-8H1z" fill="#f5a623" stroke="#c95f05" stroke-width=".7"/></svg>
        <svg class="w-[29px] h-[29px]" viewBox="0 0 29 29" fill="none"><path d="M1 3h26v25H1z" stroke="#2b7cd3" stroke-width="2"/><path d="M16 10h11v3l-6 3-3 4 3 6-6 1-6-3z" fill="#6aaee8"/><path d="M1 0h7v9l-3.500 5L1 9z" fill="#d87a0c"/><circle cx="24" cy="17" r="2" fill="#d87a0c"/><circle cx="23" cy="25" r="4" fill="#d87a0c"/></svg>
        <svg class="w-[29px] h-[29px]" viewBox="0 0 29 29" fill="none" stroke="#8f4aa6" stroke-width="1.700"><path d="M14.500 1L28 14.500 14.500 28 1 14.500zM8 8l13 13M21 8L8 21"/></svg>
        <svg class="w-[29px] h-[29px]" viewBox="0 0 29 29" fill="none" stroke="#2b7cd3" stroke-width="1.700"><path d="M2 3h19l7 11-7 12H2l8-12zM2 26L20 6M9 26l15-17"/></svg>
      </div>
      <div class="ml-[18px] mt-[5px] text-[18px] tracking-[3px] leading-none text-[#252423] font-bold">...</div>
    </div>

    <!-- field wells -->
    <div class="relative pl-[18px] pt-[14px] text-[17px] text-[#484644]">
      <div class="leading-[24px]">Values</div>
      <div class="-ml-[12px] mt-[7px] w-[255px] h-[42px] bg-white border border-dashed border-[#c8c6c4] rounded-[2px] pl-[15px] flex items-center">Add data fields here</div>
      <div class="mt-[17px] font-semibold leading-[24px]">Drill through</div>
      <div class="mt-[13px] flex items-center w-[219px] justify-between h-[24px]">
        <span>Cross-report</span>
        <span class="w-[48px] h-[24px] rounded-full border border-[#8a8886] bg-white flex items-center pl-[6px] gap-[3px] text-[14.5px] text-[#605e5c]"><i class="w-[12px] h-[12px] rounded-full bg-[#605e5c]"></i>Off</span>
      </div>
      <div class="mt-[16px] flex items-center w-[219px] justify-between h-[24px]">
        <span>Keep all filters</span>
        <span class="w-[48px] h-[24px] rounded-full bg-[#117865] flex items-center pl-[6px] gap-[3px] text-[14.5px] text-white">On<i class="w-[12px] h-[12px] rounded-full bg-white"></i></span>
      </div>
      <div class="-ml-[12px] mt-[15px] w-[255px] h-[10px] bg-white border-t border-x border-dashed border-[#c8c6c4]"></div>
      <div class="absolute right-0 top-[4px] w-[9px] h-[190px] rounded-full bg-[#8a8a8a]"></div>
    </div>
  </aside>

  <!-- data pane -->
  <aside class="w-[271px]">
    <div class="flex items-center justify-between h-[60px] pl-[14px] pr-[12px]">
      <span class="text-[22px] font-semibold text-[#252423]">Data</span>
      <svg class="w-[19px] h-[19px]" viewBox="0 0 19 19" fill="none" stroke="#252423" stroke-width="1.500"><path d="M2 1l8 8.500L2 18M9 1l8 8.500L9 18"/></svg>
    </div>
    <div class="ml-[7px] mt-[8px] w-[258px] h-[36px] bg-white border border-[#e1dfdd] border-b-[#8a8886] rounded-[5px] flex items-center">
      <svg class="ml-[18px] w-[22px] h-[22px]" viewBox="0 0 22 22" fill="none" stroke="#605e5c" stroke-width="1.500"><circle cx="9" cy="9" r="7.500"/><path d="M14.500 14.500L21 21"/></svg>
      <span class="ml-[11px] mt-[1px] text-[18.5px] text-[#605e5c]">Search</span>
    </div>
    <ul class="mt-[14px] text-[17.5px] text-[#484644]">
      <li class="h-[36px] flex items-center pl-[25px]"><svg class="w-[9px] h-[16px]" viewBox="0 0 9 16" fill="none" stroke="#484644" stroke-width="1.200"><path d="M1 1l7 7-7 7"/></svg><svg class="ml-[11px] w-[18px] h-[18px]" viewBox="0 0 18 18" fill="none" stroke="#323130" stroke-width="1.400"><rect x="1" y="1" width="16" height="16" rx="2"/><path d="M1 6h16M1 12h16M6 1v16M12 1v16"/></svg><span class="ml-[9px]">dim date</span></li>
      <li class="h-[36px] flex items-center pl-[25px]"><svg class="w-[9px] h-[16px]" viewBox="0 0 9 16" fill="none" stroke="#484644" stroke-width="1.200"><path d="M1 1l7 7-7 7"/></svg><svg class="ml-[11px] w-[18px] h-[18px]" viewBox="0 0 18 18" fill="none" stroke="#323130" stroke-width="1.400"><rect x="1" y="1" width="16" height="16" rx="2"/><path d="M1 6h16M1 12h16M6 1v16M12 1v16"/></svg><span class="ml-[9px]">dim product</span></li>
      <li class="h-[36px] flex items-center pl-[25px]"><svg class="w-[9px] h-[16px]" viewBox="0 0 9 16" fill="none" stroke="#484644" stroke-width="1.200"><path d="M1 1l7 7-7 7"/></svg><svg class="ml-[11px] w-[18px] h-[18px]" viewBox="0 0 18 18" fill="none" stroke="#323130" stroke-width="1.400"><rect x="1" y="1" width="16" height="16" rx="2"/><path d="M1 6h16M1 12h16M6 1v16M12 1v16"/></svg><span class="ml-[9px]">dim sipmethod</span></li>
      <li class="h-[36px] flex items-center pl-[25px]"><svg class="w-[9px] h-[16px]" viewBox="0 0 9 16" fill="none" stroke="#484644" stroke-width="1.200"><path d="M1 1l7 7-7 7"/></svg><svg class="ml-[11px] w-[18px] h-[18px]" viewBox="0 0 18 18" fill="none" stroke="#323130" stroke-width="1.400"><rect x="1" y="1" width="16" height="16" rx="2"/><path d="M1 6h16M1 12h16M6 1v16M12 1v16"/></svg><span class="ml-[9px]">dim state</span></li>
      <li class="h-[36px] flex items-center pl-[25px]"><svg class="w-[9px] h-[16px]" viewBox="0 0 9 16" fill="none" stroke="#484644" stroke-width="1.200"><path d="M1 1l7 7-7 7"/></svg><svg class="ml-[11px] w-[18px] h-[18px]" viewBox="0 0 18 18" fill="none" stroke="#323130" stroke-width="1.400"><rect x="1" y="1" width="16" height="16" rx="2"/><path d="M1 6h16M1 12h16M6 1v16M12 1v16"/></svg><span class="ml-[9px]">dim territory</span></li>
      <li class="h-[36px] flex items-center pl-[25px]"><svg class="w-[9px] h-[16px]" viewBox="0 0 9 16" fill="none" stroke="#484644" stroke-width="1.200"><path d="M1 1l7 7-7 7"/></svg><svg class="ml-[11px] w-[18px] h-[18px]" viewBox="0 0 18 18" fill="none" stroke="#323130" stroke-width="1.400"><rect x="1" y="1" width="16" height="16" rx="2"/><path d="M1 6h16M1 12h16M6 1v16M12 1v16"/></svg><span class="ml-[9px]">factsales</span></li>
      <li class="h-[36px] flex items-center pl-[25px]"><svg class="w-[9px] h-[16px]" viewBox="0 0 9 16" fill="none" stroke="#484644" stroke-width="1.200"><path d="M1 1l7 7-7 7"/></svg><svg class="ml-[11px] w-[20px] h-[21px]" viewBox="0 0 20 21" fill="none" stroke="#323130" stroke-width="1.300"><path d="M8 16H1V2h14v3M1 6h14M1 11h8M5 2v14M10 2v5"/><rect x="10" y="8" width="9" height="12" rx="1" fill="#f3f2f1"/><path d="M12 11h5M12 14h5M12 17h5"/></svg><span class="ml-[7px]">Table</span></li>
    </ul>
  </aside>
</main>

<!-- status bar -->
<footer class="relative h-[35px] border-t border-[#e1dfdd] bg-[#f3f2f1] flex items-center text-[16.5px] text-[#484644] shrink-0">
  <span class="ml-[6px]">Page 1 of 2</span>
  <span class="absolute left-[1602px] top-[2px] text-[18px]">-</span>
  <div class="absolute left-[1616px] top-[17px] w-[150px] h-[1px] bg-[#605e5c]"></div>
  <div class="absolute left-[1657px] top-[9px] w-[6px] h-[17px] bg-[#605e5c]"></div>
  <div class="absolute left-[1691px] top-[14px] w-[1.500px] h-[7px] bg-[#605e5c]"></div>
  <svg class="absolute left-[1774px] top-[11px] w-[12px] h-[12px]" viewBox="0 0 12 12"><path d="M5 0h2v5h5v2H7v5H5V7H0V5h5z" fill="#484644"/></svg>
  <span class="absolute left-[1806px] top-[5px] text-[#605e5c]">63%</span>
  <svg class="absolute left-[1869px] top-[9px] w-[24px] h-[18px]" viewBox="0 0 24 18" fill="none" stroke="#605e5c" stroke-width="1.500"><path d="M1 1h22v16H1z"/><path d="M8 5H4v3M16 5h4v3M8 13H4v-3M16 13h4v-3" stroke="#323130"/></svg>
</footer>

<!-- taskbar -->
<div class="relative h-[61px] bg-[#26363f] border-t border-black/60 flex items-center shrink-0 text-white">
  <div class="w-[72px] flex justify-center"><svg class="w-[24px] h-[24px]" viewBox="0 0 24 24" fill="#fff"><path d="M0 3.500l10-1.400V11H0zM11 2l13-2v11H11zM0 12h10v9L0 19.500zM11 12h13v12l-13-2z"/></svg></div>
  <div class="w-[72px] flex justify-center"><svg class="w-[34px] h-[34px]" viewBox="0 0 34 34" fill="none" stroke="#fff" stroke-width="2.800"><circle cx="20" cy="13" r="11"/><path d="M12 22L4 32"/></svg></div>
  <div class="w-[72px] flex justify-center"><svg class="w-[26px] h-[28px]" viewBox="0 0 26 28" fill="none" stroke="#fff" stroke-width="1.300"><path d="M1 2h16v3H1M1 9h16v10H1zM1 26v-3h16v3M24 1v9M24 17v10"/><path d="M22 12h3v3h-3z" fill="#fff" stroke="none"/></svg></div>
  <div class="ml-[3.500px] flex items-center">
    <div class="w-[75px] flex justify-center"><svg class="w-[32px] h-[32px]" viewBox="0 0 32 32"><path d="M0 3h11l3 3h18v22H0z" fill="#f4c33d"/><path d="M0 9h32v19H0z" fill="#fdd769"/><path d="M5 18h22v14H21V23H11v9H5z" fill="#3a8fc7"/></svg></div>
    <div class="w-[75px] flex justify-center"><svg class="w-[34px] h-[40px]" viewBox="0 0 34 40"><path d="M10 8V2h14v6" fill="none" stroke="#33a0e0" stroke-width="2"/><path d="M0 6h34v32a2 2 0 0 1-2 2H2a2 2 0 0 1-2-2z" fill="#ebebeb"/><path d="M9 14h7v7H9z" fill="#e8502a"/><path d="M18 14h7v7h-7z" fill="#7db71c"/><path d="M9 23h7v7H9z" fill="#fbb90a"/><path d="M18 23h7v7h-7z" fill="#15a4ea"/></svg></div>
    <div class="w-[75px] flex justify-center"><svg class="w-[38px] h-[38px]" viewBox="0 0 38 38" fill="none"><path d="M2 36l2.500-10A16.500 16.500 0 1 1 12 33.500z" fill="#1f2f38" stroke="#25d366" stroke-width="3"/><path d="M13 12c-2 2-1 6 3 10s8 5 10 3l-3-4-3 1-4-4 1-3z" fill="#25d366"/></svg></div>
    <div class="w-[75px] flex justify-center"><svg class="w-[36px] h-[32px]" viewBox="0 0 36 32"><rect width="36" height="32" rx="8" fill="#f5063a"/><path d="M14 10l8 6-8 6z" fill="#fff"/></svg></div>
    <div class="w-[75px] flex justify-center"><svg class="w-[36px] h-[38px]" viewBox="0 0 36 38"><path d="M14 8h20a2 2 0 0 1 2 2v26a2 2 0 0 1-2 2H20z" fill="#dadce0"/><path d="M2 0h16l8 30H2a2 2 0 0 1-2-2V2a2 2 0 0 1 2-2z" fill="#3b78e7"/><text x="11" y="20" text-anchor="middle" font-size="14" font-weight="700" fill="#fff" font-family="Roboto">G</text><text x="27" y="28" text-anchor="middle" font-size="13" fill="#666" font-family="Noto Sans CJK SC">文</text></svg></div>
    <div class="w-[75px] flex justify-center"><svg class="w-[36px] h-[40px]" viewBox="0 0 40 40"><ellipse cx="20" cy="20" rx="20" ry="20" fill="#fff"/><path d="M30 11a13 13 0 0 0-20-1" fill="none" stroke="#ea4335" stroke-width="5"/><path d="M10 10a13 13 0 0 0-2 16" fill="none" stroke="#fbbc05" stroke-width="5"/><path d="M8 26a13 13 0 0 0 22 4" fill="none" stroke="#34a853" stroke-width="5"/><path d="M30 30a13 13 0 0 0 4-11H20v5h8" fill="none" stroke="#4285f4" stroke-width="5"/></svg></div>
    <div class="w-[75px] flex justify-center"><svg class="w-[36px] h-[40px]" viewBox="0 0 40 40"><ellipse cx="20" cy="20" rx="20" ry="20" fill="#fff"/><path d="M30 11a13 13 0 0 0-20-1" fill="none" stroke="#ea4335" stroke-width="5"/><path d="M10 10a13 13 0 0 0-2 16" fill="none" stroke="#fbbc05" stroke-width="5"/><path d="M8 26a13 13 0 0 0 22 4" fill="none" stroke="#34a853" stroke-width="5"/><path d="M30 30a13 13 0 0 0 4-11H20v5h8" fill="none" stroke="#4285f4" stroke-width="5"/></svg></div>
    <div class="w-[75px] flex justify-center"><svg class="w-[34px] h-[38px]" viewBox="0 0 34 38"><rect width="34" height="38" fill="#f0f0f0"/><rect y="36" width="34" height="2" fill="#9a9a9a"/><path d="M16 9h2v18h-2zM9 17.500h16v1.500H9zM9 7h1.500v7H9zM6 10h7.500v1.500H6zM24 7h1.500v7H24zM21 10h7.500v1.500H21zM9 22h1.500v7H9zM6 25h7.500v1.500H6zM24 22h1.500v7H24zM21 25h7.500v1.500H21z" fill="#4f7ea8"/></svg></div>
    <div class="w-[75px] flex justify-center"><svg class="w-[32px] h-[40px]" viewBox="0 0 32 40"><path d="M14 1h4l9 31H5z" fill="#f08a0c"/><path d="M11 13h10l2 8H9z" fill="#f4f4f4"/><path d="M7 27l2-3c4 2 10 2 14 0l2 3c-5 3-13 3-18 0z" fill="#f4f4f4"/><path d="M0 36l5-6h22l5 6v4H0z" fill="#e97c0a"/></svg></div>
    <div class="w-[75px] flex justify-center"><svg class="w-[36px] h-[34px]" viewBox="0 0 36 34"><circle cx="20" cy="6" r="6" fill="#7b83eb"/><circle cx="31" cy="9" r="4" fill="#5059c9"/><path d="M26 14h10v11c0 4-3 6-6 6-2 0-4-1-5-3z" fill="#5059c9"/><path d="M10 14h18v13c0 4-3 7-9 7s-9-4-9-8z" fill="#7b83eb"/><rect y="8" width="20" height="20" rx="2" fill="#4b53bc"/><path d="M5 12h10v3h-3.500v10h-3V15H5z" fill="#fff"/></svg></div>
    <div class="w-[75px] flex justify-center relative"><svg class="w-[36px] h-[34px] mt-[6px]" viewBox="0 0 36 34"><circle cx="20" cy="6" r="6" fill="#7b83eb"/><circle cx="31" cy="9" r="4" fill="#5059c9"/><path d="M26 14h10v11c0 4-3 6-6 6-2 0-4-1-5-3z" fill="#5059c9"/><path d="M10 14h18v13c0 4-3 7-9 7s-9-4-9-8z" fill="#7b83eb"/><rect y="8" width="20" height="20" rx="2" fill="#4b53bc"/><path d="M5 12h10v3h-3.500v10h-3V15H5z" fill="#fff"/></svg><span class="absolute left-[20px] top-[-2px] w-[15px] h-[15px] rounded-full bg-[#f6e7c1] text-[#7a4a1a] text-[8px] leading-[15px] text-center">JJ</span></div>
    <div class="w-[75px] flex justify-center"><svg class="w-[38px] h-[38px]" viewBox="0 0 38 38"><defs><linearGradient id="ed1" x1="0" y1="0" x2="1" y2="1"><stop offset="0" stop-color="#35c1f1"/><stop offset="1" stop-color="#66eb6e"/></linearGradient></defs><path d="M19 0c11 0 19 8 19 18 0 6-5 8-10 8-6 0-7-2-7-4 0-4 5-4 5-9 0-5-7-9-14-9C8 2 13 0 19 0z" fill="url(#ed1)"/><path d="M0 18C0 8 8 2 12 4c6 1 11 5 10 9-4 1-9 6-8 13s6 12 14 10c-3 2-6 2-9 2C8 38 0 29 0 18z" fill="#0f7fd0"/><path d="M14 24c0-6 4-10 8-11-2 3-1 7 3 10 4 2 9 2 12-1-2 9-10 15-17 13-3-2-6-6-6-11z" fill="#12518f"/></svg></div>
    <div class="w-[75px] flex justify-center"><svg class="w-[36px] h-[40px]" viewBox="0 0 40 40"><circle cx="20" cy="20" r="20" fill="#fbc02d"/><path d="M20 0a20 20 0 0 1 17.300 10H20a10 10 0 0 0-9.500 7L3 8A20 20 0 0 1 20 0z" fill="#ea4335"/><path d="M3 8l8 13a10 10 0 0 0 9 9l-7 9A20 20 0 0 1 3 8z" fill="#34a853"/><circle cx="20" cy="20" r="10" fill="#fff"/><circle cx="20" cy="20" r="8" fill="#4285f4"/></svg></div>
    <div class="w-[72px] h-[57px] bg-[#5a646b] flex justify-center items-center"><svg class="w-[28px] h-[40px]" viewBox="0 0 28 40"><path d="M18 0h10v40H18z" fill="#e8a317"/><path d="M9 13h10v27H9z" fill="#f2c029"/><path d="M0 25h10v15H0z" fill="#fad65e"/></svg></div>
    <div class="w-[75px] flex justify-center"><svg class="w-[36px] h-[40px]" viewBox="0 0 36 40"><path d="M6 0h30v40H6z" fill="#107c41"/><path d="M21 0h15v10H21z" fill="#33c481"/><path d="M21 10h15v10H21z" fill="#21a366"/><path d="M21 20h15v10H21z" fill="#185c37"/><rect y="9" width="20" height="22" rx="2" fill="#0e6b38"/><text x="10" y="25" text-anchor="middle" font-size="14" font-weight="700" fill="#fff" font-family="Roboto">X</text></svg></div>
    <div class="w-[75px] flex justify-center"><svg class="w-[38px] h-[40px]" viewBox="0 0 38 40" fill="none"><circle cx="15" cy="15" r="10" stroke="#c8d8e8" stroke-width="6" stroke-dasharray="4 2"/><circle cx="15" cy="15" r="6" fill="#26363f" stroke="#6ea6d8" stroke-width="2"/><circle cx="29" cy="31" r="5" stroke="#9cc0dc" stroke-width="4" stroke-dasharray="3 1.500"/></svg></div>
  </div>
  <svg class="absolute left-[1440px] top-[15px] w-[36px] h-[30px]" viewBox="0 0 36 30"><path d="M0 8l7-5 6 9 8-12 10 19v11H14l7-14-4 6-6-7-5 6z" fill="#e8492a"/></svg>
  <span class="absolute left-[1487px] top-[15px] text-[20px] leading-[28px]">SWDY</span>
  <svg class="absolute left-[1583px] top-[22px] w-[18px] h-[12px]" viewBox="0 0 18 12" fill="none" stroke="#fff" stroke-width="1.300"><path d="M1 11l8-10 8 10"/></svg>
  <svg class="absolute left-[1620px] top-[18px] w-[20px] h-[24px]" viewBox="0 0 20 24" fill="none" stroke="#d0d0d0" stroke-width="1.200"><path d="M1 23C1 12 7 3 19 1M6 23c0-7 5-14 13-16M11 23c0-4 3-8 8-10"/><circle cx="17" cy="22" r="1.500" fill="#fff" stroke="none"/></svg>
  <svg class="absolute left-[1655px] top-[15px] w-[20px] h-[30px]" viewBox="0 0 20 30" fill="none" stroke="#e6e6e6" stroke-width="1.200"><path d="M3 2h8M3 28h8"/><rect x="1" y="8" width="12" height="14" rx="2"/><path d="M13 13l5-3v10l-5-3"/></svg>
  <span class="absolute left-[1692px] top-[16px] text-[16.5px] leading-[24px]">ENG</span>
  <div class="absolute left-[1739px] top-[2px] w-[100px] text-center text-[16.5px] leading-[28px]">1:41 PM<br>7/1/2025</div>
  <svg class="absolute left-[1858px] top-[14px] w-[26px] h-[28px]" viewBox="0 0 26 28"><path d="M1 1h24v20H7l-6 6z" fill="#fff"/><path d="M6 6h14M6 10h14M6 14h9" stroke="#26363f" stroke-width="1.500"/></svg>
  <span class="absolute left-[1869px] top-[27px] w-[24px] h-[24px] rounded-full bg-[#26363f] border border-[#c8c6c4] text-center text-[15px] leading-[22px] font-semibold">3</span>
  <!-- running app markers -->
  <div class="absolute left-[377px] bottom-0 w-[60px] h-[3px] bg-[#76b9ed]"></div>
  <div class="absolute left-[752px] bottom-0 w-[60px] h-[3px] bg-[#76b9ed]"></div>
  <div class="absolute left-[1125px] bottom-0 w-[60px] h-[3px] bg-[#76b9ed]"></div>
  <div class="absolute left-[1193px] bottom-0 w-[72px] h-[3px] bg-[#76b9ed]"></div>
  <div class="absolute left-[1273px] bottom-0 w-[60px] h-[3px] bg-[#76b9ed]"></div>
  <div class="absolute left-[1347px] bottom-0 w-[60px] h-[3px] bg-[#76b9ed]"></div>
</div>

<!-- site watermark over the screenshot -->
<div class="absolute left-[845px] top-[940px] w-[232px] pointer-events-none flex flex-col items-center text-[#bbbbbb]/40 font-bold">
  <span class="font-['DejaVu_Sans',sans-serif] text-[65px] leading-[88px] h-[88px] scale-y-[1.15] whitespace-nowrap" dir="rtl">مستقل</span>
  <span class="font-['Lato',sans-serif] text-[42px] leading-[30px] whitespace-nowrap">mostaql.com</span>
</div>

</body>
</html>
